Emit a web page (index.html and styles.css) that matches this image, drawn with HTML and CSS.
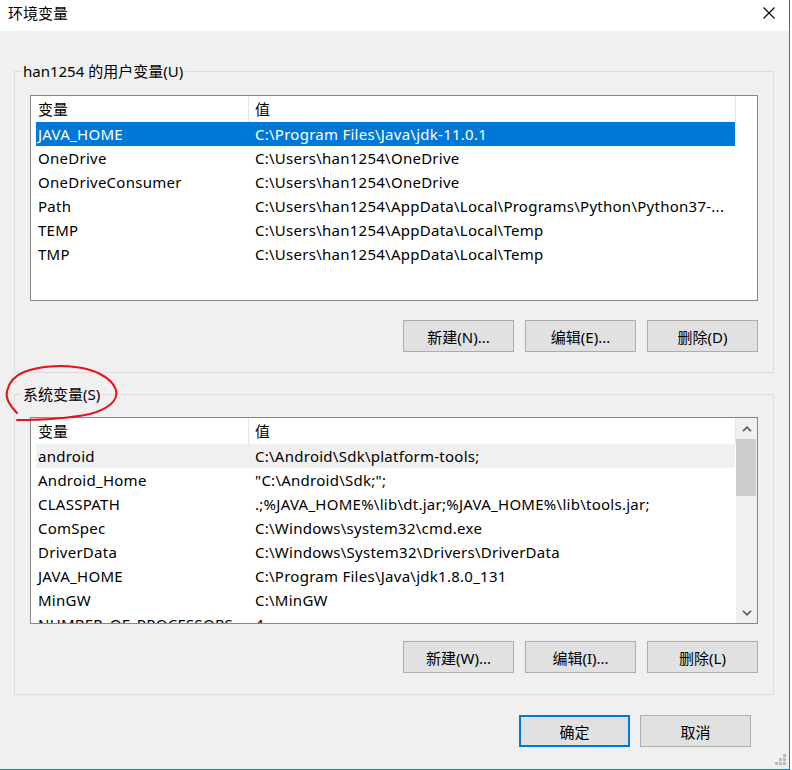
FILE: index.html
```html
<!DOCTYPE html>
<html lang="zh-CN">
<head>
    <meta charset="UTF-8" />
    <title>环境变量</title>
    <link rel="stylesheet" href="styles.css">
</head>
<body>

<div class="window">
    <div class="titlebar">
        <span class="title">环境变量</span>
        <svg class="close" width="12" height="12" viewBox="0 0 12 12">
            <path d="M0.5,0.5 L11.5,11.5 M11.5,0.5 L0.5,11.5" stroke="#000" stroke-width="1.1" fill="none"/>
        </svg>
    </div>

    <div class="content">
        <!-- 用户变量 -->
        <fieldset class="group group-user">
            <legend>han1254 的用户变量(U)</legend>
            <div class="list">
                <div class="list-main">
                    <div class="list-head">
                        <div class="hcell hcell-name">变量</div>
                        <div class="hcell hcell-value">值</div>
                    </div>
                    <div class="rows">
                        <div class="row selected"><span>JAVA_HOME</span><span>C:\Program Files\Java\jdk-11.0.1</span></div>
                        <div class="row"><span>OneDrive</span><span>C:\Users\han1254\OneDrive</span></div>
                        <div class="row"><span>OneDriveConsumer</span><span>C:\Users\han1254\OneDrive</span></div>
                        <div class="row"><span>Path</span><span>C:\Users\han1254\AppData\Local\Programs\Python\Python37-...</span></div>
                        <div class="row"><span>TEMP</span><span>C:\Users\han1254\AppData\Local\Temp</span></div>
                        <div class="row"><span>TMP</span><span>C:\Users\han1254\AppData\Local\Temp</span></div>
                    </div>
                </div>
            </div>
            <div class="buttons">
                <button class="btn">新建(N)...</button>
                <button class="btn">编辑(E)...</button>
                <button class="btn">删除(D)</button>
            </div>
        </fieldset>

        <!-- 系统变量 -->
        <fieldset class="group group-sys">
            <legend>系统变量(S)</legend>
            <div class="list">
                <div class="list-main">
                    <div class="list-head">
                        <div class="hcell hcell-name">变量</div>
                        <div class="hcell hcell-value">值</div>
                    </div>
                    <div class="rows">
                        <div class="row inactive"><span>android</span><span>C:\Android\Sdk\platform-tools;</span></div>
                        <div class="row"><span>Android_Home</span><span>"C:\Android\Sdk;";</span></div>
                        <div class="row"><span>CLASSPATH</span><span>.;%JAVA_HOME%\lib\dt.jar;%JAVA_HOME%\lib\tools.jar;</span></div>
                        <div class="row"><span>ComSpec</span><span>C:\Windows\system32\cmd.exe</span></div>
                        <div class="row"><span>DriverData</span><span>C:\Windows\System32\Drivers\DriverData</span></div>
                        <div class="row"><span>JAVA_HOME</span><span>C:\Program Files\Java\jdk1.8.0_131</span></div>
                        <div class="row"><span>MinGW</span><span>C:\MinGW</span></div>
                        <div class="row"><span>NUMBER_OF_PROCESSORS</span><span>4</span></div>
                    </div>
                </div>
                <div class="scrollbar">
                    <div class="sb-arrow">
                        <svg width="10" height="6" viewBox="0 0 10 6"><path d="M1,5.2 L5,1.2 L9,5.2" stroke="#606060" stroke-width="1.7" fill="none"/></svg>
                    </div>
                    <div class="sb-thumb"></div>
                    <div class="sb-track"></div>
                    <div class="sb-arrow">
                        <svg width="10" height="6" viewBox="0 0 10 6"><path d="M1,0.8 L5,4.8 L9,0.8" stroke="#606060" stroke-width="1.7" fill="none"/></svg>
                    </div>
                </div>
            </div>
            <div class="buttons">
                <button class="btn">新建(W)...</button>
                <button class="btn">编辑(I)...</button>
                <button class="btn">删除(L)</button>
            </div>
        </fieldset>

        <div class="dialog-buttons">
            <button class="btn btn-default">确定</button>
            <button class="btn">取消</button>
        </div>
    </div>

    <!-- 红色手绘圈注 -->
    <svg class="annotation" width="130" height="70" viewBox="0 0 130 70">
        <path d="M17,53 C10,46 5,39 7,31 C9,22 14,16 24,12 C40,6 60,5 75,7 C95,9 112,18 116,30 C119,42 105,50 90,54 C70,58 40,60 17,60"
              stroke="#e5121a" stroke-width="2" fill="none" stroke-linecap="round"/>
    </svg>

    <svg class="grip" width="12" height="12" viewBox="0 0 12 12" fill="#b9b9b9">
        <rect x="8" y="0" width="3" height="3"/>
        <rect x="4" y="4" width="3" height="3"/>
        <rect x="8" y="4" width="3" height="3"/>
        <rect x="0" y="8" width="3" height="3"/>
        <rect x="4" y="8" width="3" height="3"/>
        <rect x="8" y="8" width="3" height="3"/>
    </svg>
</div>

</body>
</html>
```

FILE: styles.css
```css
body {
    margin: 0;
    background: #fff;
    font-family: "Noto Sans", "Noto Sans CJK SC", sans-serif;
    font-size: 15px;
    color: #000;
}
.window {
    position: relative;
    width: 789px;
    height: 769px;
    background: #f0f0f0;
    border-right: 1px solid #1979ca;
    border-bottom: 1px solid #1979ca;
    overflow: hidden;
}
.titlebar {
    display: flex;
    align-items: flex-start;
    height: 31px;
    padding: 4px 14px 0 8px;
    box-sizing: border-box;
    background: #fff;
}
.title {
    line-height: 19px;
}
.close {
    margin-left: auto;
    margin-top: 3px;
}
.content {
    padding: 31px 15px 0 14px;
}

/* 分组框 */
.group {
    margin: 0;
    padding: 0 0 20px;
    border: 1px solid #dcdcdc;
    min-inline-size: 0;
}
.group legend {
    margin-left: 6px;
    padding: 0 2px;
    line-height: 19px;
}
.group-sys {
    margin-top: 12px;
    padding-bottom: 21px;
}

/* 列表 */
.list {
    display: flex;
    height: 206px;
    margin: 14px 15px 0;
    border: 1px solid #828790;
    background: #fff;
    box-sizing: border-box;
}
.group-sys .list {
    margin-top: 13px;
    height: 207px;
}
.list-main {
    flex: 1;
    overflow: hidden;
}
.list-head {
    display: flex;
    height: 26px;
    line-height: 26px;
}
.hcell {
    border-right: 1px solid #e5e5e5;
    box-sizing: border-box;
}
.hcell-name {
    width: 218px;
    padding-left: 7px;
}
.hcell-value {
    width: 487px;
    padding-left: 6px;
}
.row {
    display: grid;
    grid-template-columns: 217px 1fr;
    width: 699px;
    margin-left: 5px;
    line-height: 24px;
    height: 24px;
    white-space: nowrap;
    letter-spacing: 0.26px;
}
.row span {
    padding-left: 2px;
    overflow: hidden;
}
.row.selected {
    background: #0078d7;
    color: #fff;
}
.row.inactive {
    background: #f0f0f0;
}

/* 滚动条 */
.scrollbar {
    display: flex;
    flex-direction: column;
    width: 21px;
    background: #f0f0f0;
}
.sb-arrow {
    display: flex;
    align-items: center;
    justify-content: center;
    height: 21px;
}
.sb-thumb {
    height: 57px;
    margin-right: 1px;
    background: #cdcdcd;
}
.sb-track {
    flex: 1;
}

/* 按钮 */
.buttons {
    display: flex;
    justify-content: flex-end;
    gap: 11px;
    margin: 19px 15px 0;
}
.group-sys .buttons {
    margin-top: 17px;
}
.btn {
    width: 111px;
    height: 32px;
    padding: 0;
    background: #e1e1e1;
    border: 1px solid #adadad;
    font-family: inherit;
    font-size: 15px;
    color: #000;
}
.btn-default {
    border: 2px solid #0078d7;
}
.dialog-buttons {
    display: flex;
    justify-content: flex-end;
    gap: 10px;
    margin: 20px 23px 0 0;
}

.annotation {
    position: absolute;
    left: 0;
    top: 360px;
}
.grip {
    position: absolute;
    right: 2px;
    bottom: 3px;
}
```
